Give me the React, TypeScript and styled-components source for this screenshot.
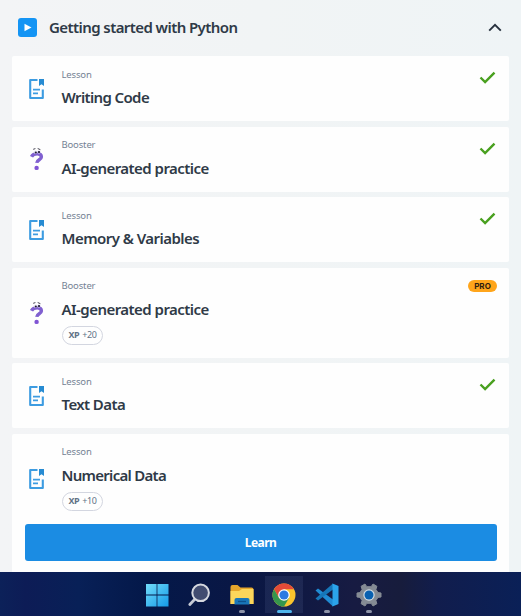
import React from "react";
import styled, { createGlobalStyle } from "styled-components";

const GlobalStyle = createGlobalStyle`
  * { box-sizing: border-box; }
  body { margin: 0; overflow: hidden; background: #f1f4f5; }
`;

const Page = styled.div`
  width: 521px;
  height: 616px;
  display: flex;
  flex-direction: column;
  overflow: hidden;
  background: linear-gradient(90deg, #f3f4f6 0%, #f1f4f5 50%, #eff4f6 100%);
  color: #2f3a47;
  font-family: "Noto Sans", "Open Sans", sans-serif;
`;

const Header = styled.header`
  height: 56px;
  flex: none;
  display: flex;
  align-items: center;
  padding: 0 19px 1px 18px;
`;

const ModuleIcon = styled.svg`
  width: 19px;
  height: 19px;
  flex: none;
`;

const Heading = styled.h1<{ $spacing: number }>`
  margin: 0 auto 1px 12px;
  font-size: 15px;
  line-height: 22px;
  font-weight: 600;
  letter-spacing: ${(p) => p.$spacing}px;
  white-space: nowrap;
`;

const Chevron = styled.svg`
  width: 14px;
  height: 9px;
`;

const List = styled.main`
  flex: 1;
  min-height: 0;
  overflow: hidden;
  display: flex;
  flex-direction: column;
  gap: 5.5px;
  padding: 0 12px;
`;

const Card = styled.article<{ $height: number }>`
  flex: none;
  height: ${(p) => p.$height}px;
  background: #fefefe;
  border-radius: 2px;
`;

const Row = styled.div<{ $height: number }>`
  height: ${(p) => p.$height}px;
  display: grid;
  grid-template-columns: 49.5px 1fr auto;
`;

const IconCell = styled.div`
  display: flex;
  align-items: center;
  padding-left: 16px;
`;

const Details = styled.div`
  padding-top: 10.5px;
`;

const Kind = styled.div`
  height: 16px;
  font-size: 9.5px;
  line-height: 16px;
  color: #748294;
  letter-spacing: -0.15px;
`;

const Title = styled.h2<{ $spacing: number }>`
  margin: 3.6px 0 0;
  font-size: 15px;
  line-height: 22px;
  font-weight: 600;
  letter-spacing: ${(p) => p.$spacing}px;
  white-space: nowrap;
`;

const XpPill = styled.div`
  display: inline-flex;
  align-items: center;
  gap: 3px;
  height: 19px;
  margin-top: 6.4px;
  padding: 0 6px;
  border: 1px solid #d3d6e0;
  border-radius: 10px;
  font-size: 9px;
  line-height: 16px;
  letter-spacing: -0.45px;
  color: #627286;
  vertical-align: top;
`;

const Status = styled.div<{ $pro: boolean }>`
  padding: ${(p) => (p.$pro ? "12.5px 12px 0 0" : "15px 13px 0 0")};
`;

const CheckIcon = styled.svg`
  display: block;
  width: 17px;
  height: 13px;
`;

const ProBadge = styled.span`
  display: block;
  width: 29px;
  height: 12px;
  border-radius: 6px;
  background: #ffa51b;
  color: #30200f;
  font: 700 8px/12px Inter, sans-serif;
  text-align: center;
`;

const LearnButton = styled.button`
  display: block;
  width: calc(100% - 25px);
  height: 36.5px;
  margin: 0 12.5px;
  padding: 1px 0 0;
  border: 0;
  border-radius: 3px;
  background: #1b8ce3;
  color: #fff;
  font: 700 12px/20px "Noto Sans", sans-serif;
  letter-spacing: -0.55px;
`;

const Taskbar = styled.footer`
  flex: none;
  height: 44px;
  display: flex;
  justify-content: center;
  gap: 4.5px;
  padding-left: 5px;
  background: linear-gradient(90deg, #0c2159 0%, #0d1c56 5%, #082057 15%, #041849 28%, #0a1744 48%, #171b42 68%, #171c3c 77%, #111d4d 84%, #0a2057 100%);
`;

const TaskItem = styled.div<{ $active: boolean }>`
  width: 38px;
  height: 44px;
  padding-top: 10px;
  display: flex;
  flex-direction: column;
  align-items: center;
  background: ${(p) =>
    p.$active ? "linear-gradient(rgba(150,170,220,0) 4px, rgba(150,170,220,.1) 4px 41px, transparent 41px)" : "transparent"};
  border-radius: 4px;
`;

const AppIcon = styled.svg`
  width: 26px;
  height: 26px;
  flex: none;
`;

const Indicator = styled.i<{ $active: boolean }>`
  width: ${(p) => (p.$active ? 15 : 6)}px;
  height: 3px;
  margin-top: 2px;
  border-radius: 2px;
  background: ${(p) => (p.$active ? "#4fb5ed" : "#8d93a8")};
`;

const LessonIcon = () => (
  <svg width="18" height="22" viewBox="0 0 18 22">
    <path d="M9.5 2H2.2v18h12.6v-8.5" fill="none" stroke="#3d9ce1" strokeWidth="2.1" strokeLinejoin="round" />
    <path d="M11 1h5v7l-2.5-1.7L11 8z" fill="#278bd2" />
    <path d="M5 11.7h7M5 15.3h5" stroke="#3d9ce1" strokeWidth="1.7" />
  </svg>
);

const BoosterIcon = () => (
  <svg width="18" height="24" viewBox="0 0 18 24">
    <path d="M3.5 9.8C4.6 7.5 6.8 6.8 9.2 6.8c3 0 4.2 1.2 4.2 3.2 0 2.8-4.5 2.8-4.6 5.9" fill="none" stroke="#8060d0" strokeWidth="3.4" />
    <circle cx="8.6" cy="20.9" r="2.2" fill="#8054d4" />
    <path d="M5.2 2.3 7.4 1.6M9.7 1.5l2.7 1.2" stroke="#454351" strokeWidth="1" />
    <ellipse cx="7.5" cy="5.1" rx="2" ry="1.7" fill="#eeeaf9" />
    <ellipse cx="10.9" cy="5.1" rx="1.6" ry="1.7" fill="#d9d2f1" />
    <circle cx="7.8" cy="5.5" r="1.1" fill="#201b35" />
    <circle cx="11" cy="5.1" r="1.1" fill="#201b35" />
  </svg>
);

type Item = {
  kind: "Lesson" | "Booster";
  title: string;
  spacing: number;
  xp?: string;
  status?: "done" | "pro";
  height: number;
  learn?: boolean;
};

const items: Item[] = [
  { kind: "Lesson", title: "Writing Code", spacing: -0.63, status: "done", height: 65 },
  { kind: "Booster", title: "AI-generated practice", spacing: -0.54, status: "done", height: 65 },
  { kind: "Lesson", title: "Memory & Variables", spacing: -0.54, status: "done", height: 65 },
  { kind: "Booster", title: "AI-generated practice", spacing: -0.54, xp: "+20", status: "pro", height: 90 },
  { kind: "Lesson", title: "Text Data", spacing: -0.6, status: "done", height: 65 },
  { kind: "Lesson", title: "Numerical Data", spacing: -0.71, xp: "+10", height: 150, learn: true },
];

const apps = [
  {
    name: "Start",
    art: (
      <>
        <linearGradient id="start" x1="0" y1="0" x2="1" y2="1"><stop stopColor="#72dcf9" /><stop offset="1" stopColor="#149be8" /></linearGradient>
        <path d="M2 2h10.6v10.6H2zM13.4 2H24.5v10.6H13.4zM2 13.4h10.6V24.5H2zM13.4 13.4H24.5V24.5H13.4z" fill="url(#start)" />
      </>
    ),
  },
  {
    name: "Search",
    art: (
      <>
        <path d="m9 17-5.2 5.5" stroke="#c5cad5" strokeWidth="2.8" strokeLinecap="round" />
        <circle cx="14.6" cy="10.8" r="8.3" fill="#414c70" stroke="#d5d8df" strokeWidth="2" />
      </>
    ),
  },
  {
    name: "Files",
    running: true,
    art: (
      <>
        <path d="M1.5 5Q1.5 3 3.5 3h5l3 2.5h11q2 0 2 2V22h-23z" fill="#e6a62b" />
        <path d="M1.5 9h8.5l3-2h11.5v15h-23z" fill="#fcd65b" />
        <path d="M5.5 22.5V18q0-2 2-2h11q2 0 2 2v4.5z" fill="#1976b9" />
        <path d="M9 19.5h8" stroke="#0c508c" strokeWidth="1.3" />
      </>
    ),
  },
  {
    name: "Chrome",
    active: true,
    running: true,
    art: (
      <>
        <circle cx="13" cy="13" r="11.5" fill="#fbc52d" />
        <path d="M13 7.25h9.96A11.5 11.5 0 0 0 3.04 7.25L8 15.9z" fill="#e34a38" />
        <path d="M3.04 7.25A11.5 11.5 0 0 0 13 24.5l5-8.6L8 15.9z" fill="#36964d" />
        <circle cx="13" cy="13" r="5.8" fill="#fff" />
        <circle cx="13" cy="13" r="4.6" fill="#2c7ae1" />
      </>
    ),
  },
  {
    name: "Editor",
    running: true,
    art: (
      <>
        <path d="m1.5 8.5 2.5-2 15 11v7z" fill="#208bd3" />
        <path d="m1.5 16.5 2.5 2 15-11v-6z" fill="#1676b8" />
        <path d="m18.5 1.5 6 2.6v17.8l-6 2.6z" fill="#2ba4ea" />
      </>
    ),
  },
  {
    name: "Settings",
    running: true,
    art: (
      <>
        <path d="m9 2 1.8 2.7h4.4L17 2l3.9 2.3-1 3.1 2.1 3.2 3 .4v4l-3 .4-2.1 3.2 1 3.1L17 24l-1.8-2.7h-4.4L9 24l-3.9-2.3 1-3.1L4 15.4 1 15v-4l3-.4 2.1-3.2-1-3.1z" fill="#858b94" stroke="#858b94" strokeLinejoin="round" />
        <circle cx="13" cy="13" r="5.7" fill="#d2dce4" />
        <circle cx="13" cy="13" r="4.5" fill="#0860b0" />
      </>
    ),
  },
];

export default function App() {
  return (
    <>
      <GlobalStyle />
      <Page>
        <Header>
          <ModuleIcon viewBox="0 0 19 19">
            <rect width="19" height="19" rx="3" fill="#1494f4" />
            <path d="m6.5 5.8 7 3.7-7 3.7z" fill="#fff" />
          </ModuleIcon>
          <Heading $spacing={-0.58}>Getting started with Python</Heading>
          <Chevron viewBox="0 0 14 9"><path d="m1.2 7.7 5.8-5.8 5.8 5.8" fill="none" stroke="#27313e" strokeWidth="1.9" /></Chevron>
        </Header>
        <List>
          {items.map((item, index) => (
            <Card key={index} $height={item.height}>
              <Row $height={item.learn ? 90.5 : item.height}>
                <IconCell>{item.kind === "Lesson" ? <LessonIcon /> : <BoosterIcon />}</IconCell>
                <Details>
                  <Kind>{item.kind}</Kind>
                  <Title $spacing={item.spacing}>{item.title}</Title>
                  {item.xp && <XpPill><b>XP</b><span>{item.xp}</span></XpPill>}
                </Details>
                <Status $pro={item.status === "pro"}>
                  {item.status === "done" && <CheckIcon viewBox="0 0 17 13"><path d="m1.5 6.5 4.6 4.6L15.5 1.7" fill="none" stroke="#49a01f" strokeWidth="2.4" /></CheckIcon>}
                  {item.status === "pro" && <ProBadge>PRO</ProBadge>}
                </Status>
              </Row>
              {item.learn && <LearnButton>Learn</LearnButton>}
            </Card>
          ))}
        </List>
        <Taskbar>
          {apps.map((app) => (
            <TaskItem key={app.name} $active={!!app.active}>
              <AppIcon viewBox="0 0 26 26">{app.art}</AppIcon>
              {app.running && <Indicator $active={!!app.active} />}
            </TaskItem>
          ))}
        </Taskbar>
      </Page>
    </>
  );
}
